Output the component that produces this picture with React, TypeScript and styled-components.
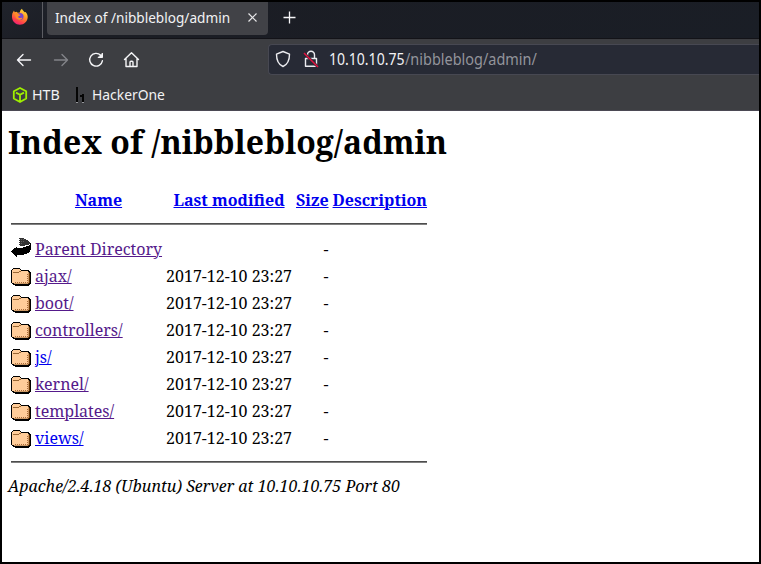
import React from "react";
import styled, { createGlobalStyle } from "styled-components";

const GlobalStyle = createGlobalStyle`
  *, *::before, *::after { box-sizing: border-box; }
  body { margin: 0; background: #000; }
`;

const Window = styled.div`
  display: flex;
  flex-direction: column;
  width: 761px;
  height: 564px;
  border: 2px solid #000;
  background: #fff;
  overflow: hidden;
  font-family: "Noto Sans", "Open Sans", sans-serif;
`;

const TabBar = styled.div`
  display: flex;
  align-items: flex-start;
  height: 37px;
  flex: none;
  background: linear-gradient(160deg, #20232b 0, #1b1d24 60px, #1a1e26 100%);
  border-bottom: 1px solid #131318;
`;

const PinnedTab = styled.div`
  width: 41px;
  height: 36px;
  padding: 6px 0 0 9px;
  border-right: 1px solid #5c5d63;
`;

const Tab = styled.div`
  display: flex;
  align-items: center;
  justify-content: space-between;
  width: 221px;
  height: 33px;
  margin-left: 4px;
  padding: 0 11px 3px 8px;
  border-radius: 0 0 4px 4px;
  background: #414247;
`;

const Label = styled.span<{ $size?: number; $width: number; $scale: number; $color?: string }>`
  display: block;
  width: ${(p) => p.$width}px;
  color: ${(p) => p.$color ?? "#f2f2f4"};
  font-size: ${(p) => p.$size ?? 15}px;
  line-height: 22px;
  white-space: nowrap;
  transform: scaleX(${(p) => p.$scale});
  transform-origin: 0 50%;
`;

const NewTab = styled.div`
  margin: 9px 0 0 15px;
  height: 13px;
`;

const Icon = styled.svg`
  display: block;
  flex: none;
  overflow: visible;
`;

const Toolbar = styled.div`
  display: flex;
  align-items: center;
  height: 41px;
  flex: none;
  padding-left: 14px;
  background: #3d3e42;
`;

const NavButtons = styled.div`
  display: flex;
  gap: 15.5px;
  width: 252px;
`;

const AddressBar = styled.div`
  display: flex;
  align-items: center;
  flex: 1;
  height: 31px;
  padding: 0 0 1px 6px;
  border: 1px solid #474852;
  border-right: 0;
  border-radius: 4px 0 0 4px;
  background: #272a35;
`;

const SiteIcons = styled.div`
  display: flex;
  gap: 8px;
  width: 54px;
`;

const Bookmarks = styled.div`
  display: flex;
  align-items: flex-start;
  height: 31px;
  flex: none;
  padding: 4px 0 0 10px;
  background: #3d3e42;
  border-bottom: 1px solid #4b4954;
`;

const Bookmark = styled.div<{ $width: number; $gap: number }>`
  display: flex;
  align-items: center;
  gap: ${(p) => p.$gap}px;
  height: 21px;
  width: ${(p) => p.$width}px;

  ${Label} {
    padding-bottom: 2px;
  }
`;

const Page = styled.main`
  flex: 1;
  padding: 9px 6px 0;
  background: #fff;
  color: #000;
  font-family: "Noto Serif", serif;
  font-size: 16px;
  line-height: 23px;
`;

const Heading = styled.h1`
  height: 44px;
  margin: 0 0 21px;
  font-size: 32px;
  line-height: 44px;
`;

const Listing = styled.table`
  border-spacing: 2px;
  border-collapse: separate;
`;

const Cell = styled.td<{ $align?: string }>`
  height: 25px;
  padding: 2px 1px 0;
  vertical-align: top;
  text-align: ${(p) => p.$align ?? "left"};
  white-space: pre;
`;

const IconCell = styled(Cell)`
  padding: 1px;
`;

const HeadCell = styled.th`
  height: 25px;
  padding: 2px 1px 0;
  vertical-align: top;
  white-space: nowrap;
`;

const RuleCell = styled.th`
  padding: 1px;
`;

const Rule = styled.hr`
  height: 2px;
  margin: 8px 0;
  border: 0;
  border-top: 1px solid #4d4d4d;
  border-bottom: 1px solid #808080;
`;

const Link = styled.a<{ $visited?: boolean }>`
  color: ${(p) => (p.$visited ? "#551a8b" : "#0000ee")};
  text-decoration: underline;
  text-decoration-thickness: 1px;
  text-decoration-skip-ink: auto;
  cursor: pointer;
`;

const Footer = styled.address`
  padding-top: 1px;
  font-style: italic;
`;

const FirefoxLogo = () => (
  <Icon width="18" height="18" viewBox="0 0 18 18">
    <defs>
      <linearGradient id="ff" x1="0.8" y1="0" x2="0.3" y2="1">
        <stop offset="0" stopColor="#ffe63d" />
        <stop offset="0.4" stopColor="#ff9a25" />
        <stop offset="0.75" stopColor="#ff4548" />
        <stop offset="1" stopColor="#ee1b78" />
      </linearGradient>
    </defs>
    <path d="M1.4 5.2 3 2.6l.7 1.7 1.8-.5 1.3.9 2-.1C9 3 9.700 1.500 11 .8c.3 1.600 1.700 2.200 2.800 3.500l.8-.4c1.500 1.600 2.200 3.400 2.100 5.400-.2 4.300-3.600 7.500-7.800 7.500S1.200 13.500 1 9.300c-.1-1.500.1-3 .4-4.100z" fill="url(#ff)" />
    <circle cx="9" cy="8.600" r="3.500" fill="#7544c9" />
    <path d="M3.500 5.200c2-.6 3.500.1 4.300 1.100l2 .6-1.700 1.200c-1.200.2-1.200 1.200-.2 1.700 1.500.6 2.300-.6 3.600 0-1 2.400-4.300 2.800-6 .8-1.300-1.600-.9-3.200-2-5.400z" fill="#ff8a2b" />
  </Icon>
);

const FolderIcon = () => (
  <Icon width="20" height="22" viewBox="0 0 20 22" shapeRendering="crispEdges">
    <path d="M2 4h7v1h1v1h8v1h1v1h1v12h-1v1h-1v1H4v-1H2v-1H1v-1H0V6h1V5h1z" fill="#000" />
    <path d="M2 5h7v1h1v1h7v1h1v11h-1v1H3v-1H1V6h1z" fill="#fc9" />
    <path d="M17 8h1v11h-1zM3 19h14v1H3z" fill="#c96" />
    <path d="M18 9h1v10h-1v1h-1v-1h1z" fill="#630" />
    <path d="M2 8h6v1H2zM8 7h2v1H8z" fill="#963" />
    <path d="M4 18.500h13M16.500 10v8" fill="none" stroke="#a86a3a" strokeDasharray="1 1" />
  </Icon>
);

const BackIcon = () => (
  <Icon width="20" height="22" viewBox="0 0 20 22" shapeRendering="crispEdges">
    <path d="M8 1h5v1h2v1h2v1h1v1h1v2h-1v1h-4v1H9V8H8V7h1V6H8V5h1V4H8V3h1V2H8z" fill="#333" />
    <path d="M10 2.500h1m1 0h1m-3 2h1m1 0h1m-3 2h1" stroke="#606060" />
    <path d="M19 6h1v7h-1v2h-1v1h-2v1h-3v1H6v2H5v-1H4v-1H3v-1H2v-1H1v-1H0v-1h1v-1h1v-1h1v-1h2v-1h1v1h6v-1h3V9h3V8h1z" fill="#000" />
  </Icon>
);

const NavIcon = ({ kind }: { kind: "back" | "forward" | "reload" | "home" }) => (
  <Icon width="20" height="20" viewBox="0 0 20 20" fill="none" stroke={kind === "forward" ? "#838489" : "#f5f5f7"} strokeWidth="1.4" strokeLinecap="round" strokeLinejoin="round">
    {kind === "back" && <path d="M14.500 10H1.500M7 4.500 1.500 10l5.500 5.500" />}
    {kind === "forward" && <path d="M2.500 10h13M10 4.500l5.500 5.500-5.500 5.500" />}
    {kind === "reload" && (
      <>
        <path d="M13.800 5.400A6.400 6.400 0 1 0 15.400 10.800" />
        <path d="M15.500 3.500v4h-4z" fill="#f5f5f7" strokeWidth="1" />
      </>
    )}
    {kind === "home" && <path d="M1.500 9.500 8.500 2.800l7 6.700M3 8.300v8.200h11V8.300M7 16.300v-4q0-1 1-1h1q1 0 1 1v4" />}
  </Icon>
);

const HtbIcon = () => (
  <Icon width="15" height="16" viewBox="0 0 15 16" fill="none" stroke="#9fef00" strokeWidth="1.800" strokeLinejoin="round">
    <path d="M8 1 14.200 4.200v7.300L8 15 1.800 11.500V4.200zM4 5.600 8 7.800l4-2.200M8 8v6" />
  </Icon>
);

const HackerOneIcon = () => (
  <Icon width="9" height="16" viewBox="0 0 9 16">
    <path d="M0 0h2v15H0zM6 7h2v8H6zM4 8h2v2H4z" fill="#050505" />
    <path d="M0 15.500h2M6 15.500h2" stroke="#96979b" />
  </Icon>
);

const entries = [
  { name: "ajax/", visited: true },
  { name: "boot/", visited: true },
  { name: "controllers/", visited: true },
  { name: "js/", visited: false },
  { name: "kernel/", visited: true },
  { name: "templates/", visited: true },
  { name: "views/", visited: false },
];

export default function App() {
  return (
    <Window>
      <GlobalStyle />
      <TabBar>
        <PinnedTab><FirefoxLogo /></PinnedTab>
        <Tab>
          <Label $width={175} $scale={0.907}>Index of /nibbleblog/admin</Label>
          <Icon width="9" height="9" viewBox="0 0 9 9" stroke="#e8e8ea" strokeWidth="1.2">
            <path d="m.5.5 8 8m0-8-8 8" />
          </Icon>
        </Tab>
        <NewTab>
          <Icon width="13" height="13" viewBox="0 0 13 13" stroke="#f5f5f7" strokeWidth="1.300">
            <path d="M6.500.5v12M.5 6.500h12" />
          </Icon>
        </NewTab>
      </TabBar>
      <Toolbar>
        <NavButtons>
          <NavIcon kind="back" />
          <NavIcon kind="forward" />
          <NavIcon kind="reload" />
          <NavIcon kind="home" />
        </NavButtons>
        <AddressBar>
          <SiteIcons>
            <Icon width="16" height="18" viewBox="0 0 16 18" fill="none" stroke="#ececf0" strokeWidth="1.400" strokeLinejoin="round">
              <path d="M8 1.500 14.500 4.200C14.500 10 12.500 14.500 8 16.500 3.500 14.500 1.500 10 1.500 4.200z" />
            </Icon>
            <Icon width="20" height="18" viewBox="0 0 20 18" fill="none" stroke="#ececf0" strokeWidth="1.400" strokeLinejoin="round">
              <path d="M8.500 8V4.800a3.500 3.500 0 0 1 7 0V8M6.500 8.500h11v7.800h-11z" />
              <path d="m5 3 14 14" stroke="#272a35" strokeWidth="2.600" />
              <path d="m5 3 14 14" stroke="#e3123f" strokeWidth="1.500" />
            </Icon>
          </SiteIcons>
          <Label $width={76} $scale={0.905} $size={15.5}>10.10.10.75</Label>
          <Label $width={131} $scale={0.932} $size={15.5} $color="#93949b">/nibbleblog/admin/</Label>
        </AddressBar>
      </Toolbar>
      <Bookmarks>
        <Bookmark $width={64} $gap={5}>
          <HtbIcon />
          <Label $width={28} $scale={0.95}>HTB</Label>
        </Bookmark>
        <Bookmark $width={100} $gap={7}>
          <HackerOneIcon />
          <Label $width={73} $scale={0.925}>HackerOne</Label>
        </Bookmark>
      </Bookmarks>
      <Page>
        <Heading>Index of /nibbleblog/admin</Heading>
        <Listing>
          <tbody>
            <tr>
              <HeadCell />
              <HeadCell><Link>Name</Link></HeadCell>
              <HeadCell><Link>Last modified</Link></HeadCell>
              <HeadCell><Link>Size</Link></HeadCell>
              <HeadCell><Link>Description</Link></HeadCell>
            </tr>
            <tr><RuleCell colSpan={5}><Rule /></RuleCell></tr>
            <tr>
              <IconCell><BackIcon /></IconCell>
              <Cell><Link $visited>Parent Directory</Link></Cell>
              <Cell />
              <Cell $align="right">-</Cell>
              <Cell />
            </tr>
            {entries.map((e) => (
              <tr key={e.name}>
                <IconCell><FolderIcon /></IconCell>
                <Cell><Link $visited={e.visited}>{e.name}</Link></Cell>
                <Cell $align="right">2017-12-10 23:27</Cell>
                <Cell $align="right">-</Cell>
                <Cell />
              </tr>
            ))}
            <tr><RuleCell colSpan={5}><Rule /></RuleCell></tr>
          </tbody>
        </Listing>
        <Footer>Apache/2.4.18 (Ubuntu) Server at 10.10.10.75 Port 80</Footer>
      </Page>
    </Window>
  );
}
